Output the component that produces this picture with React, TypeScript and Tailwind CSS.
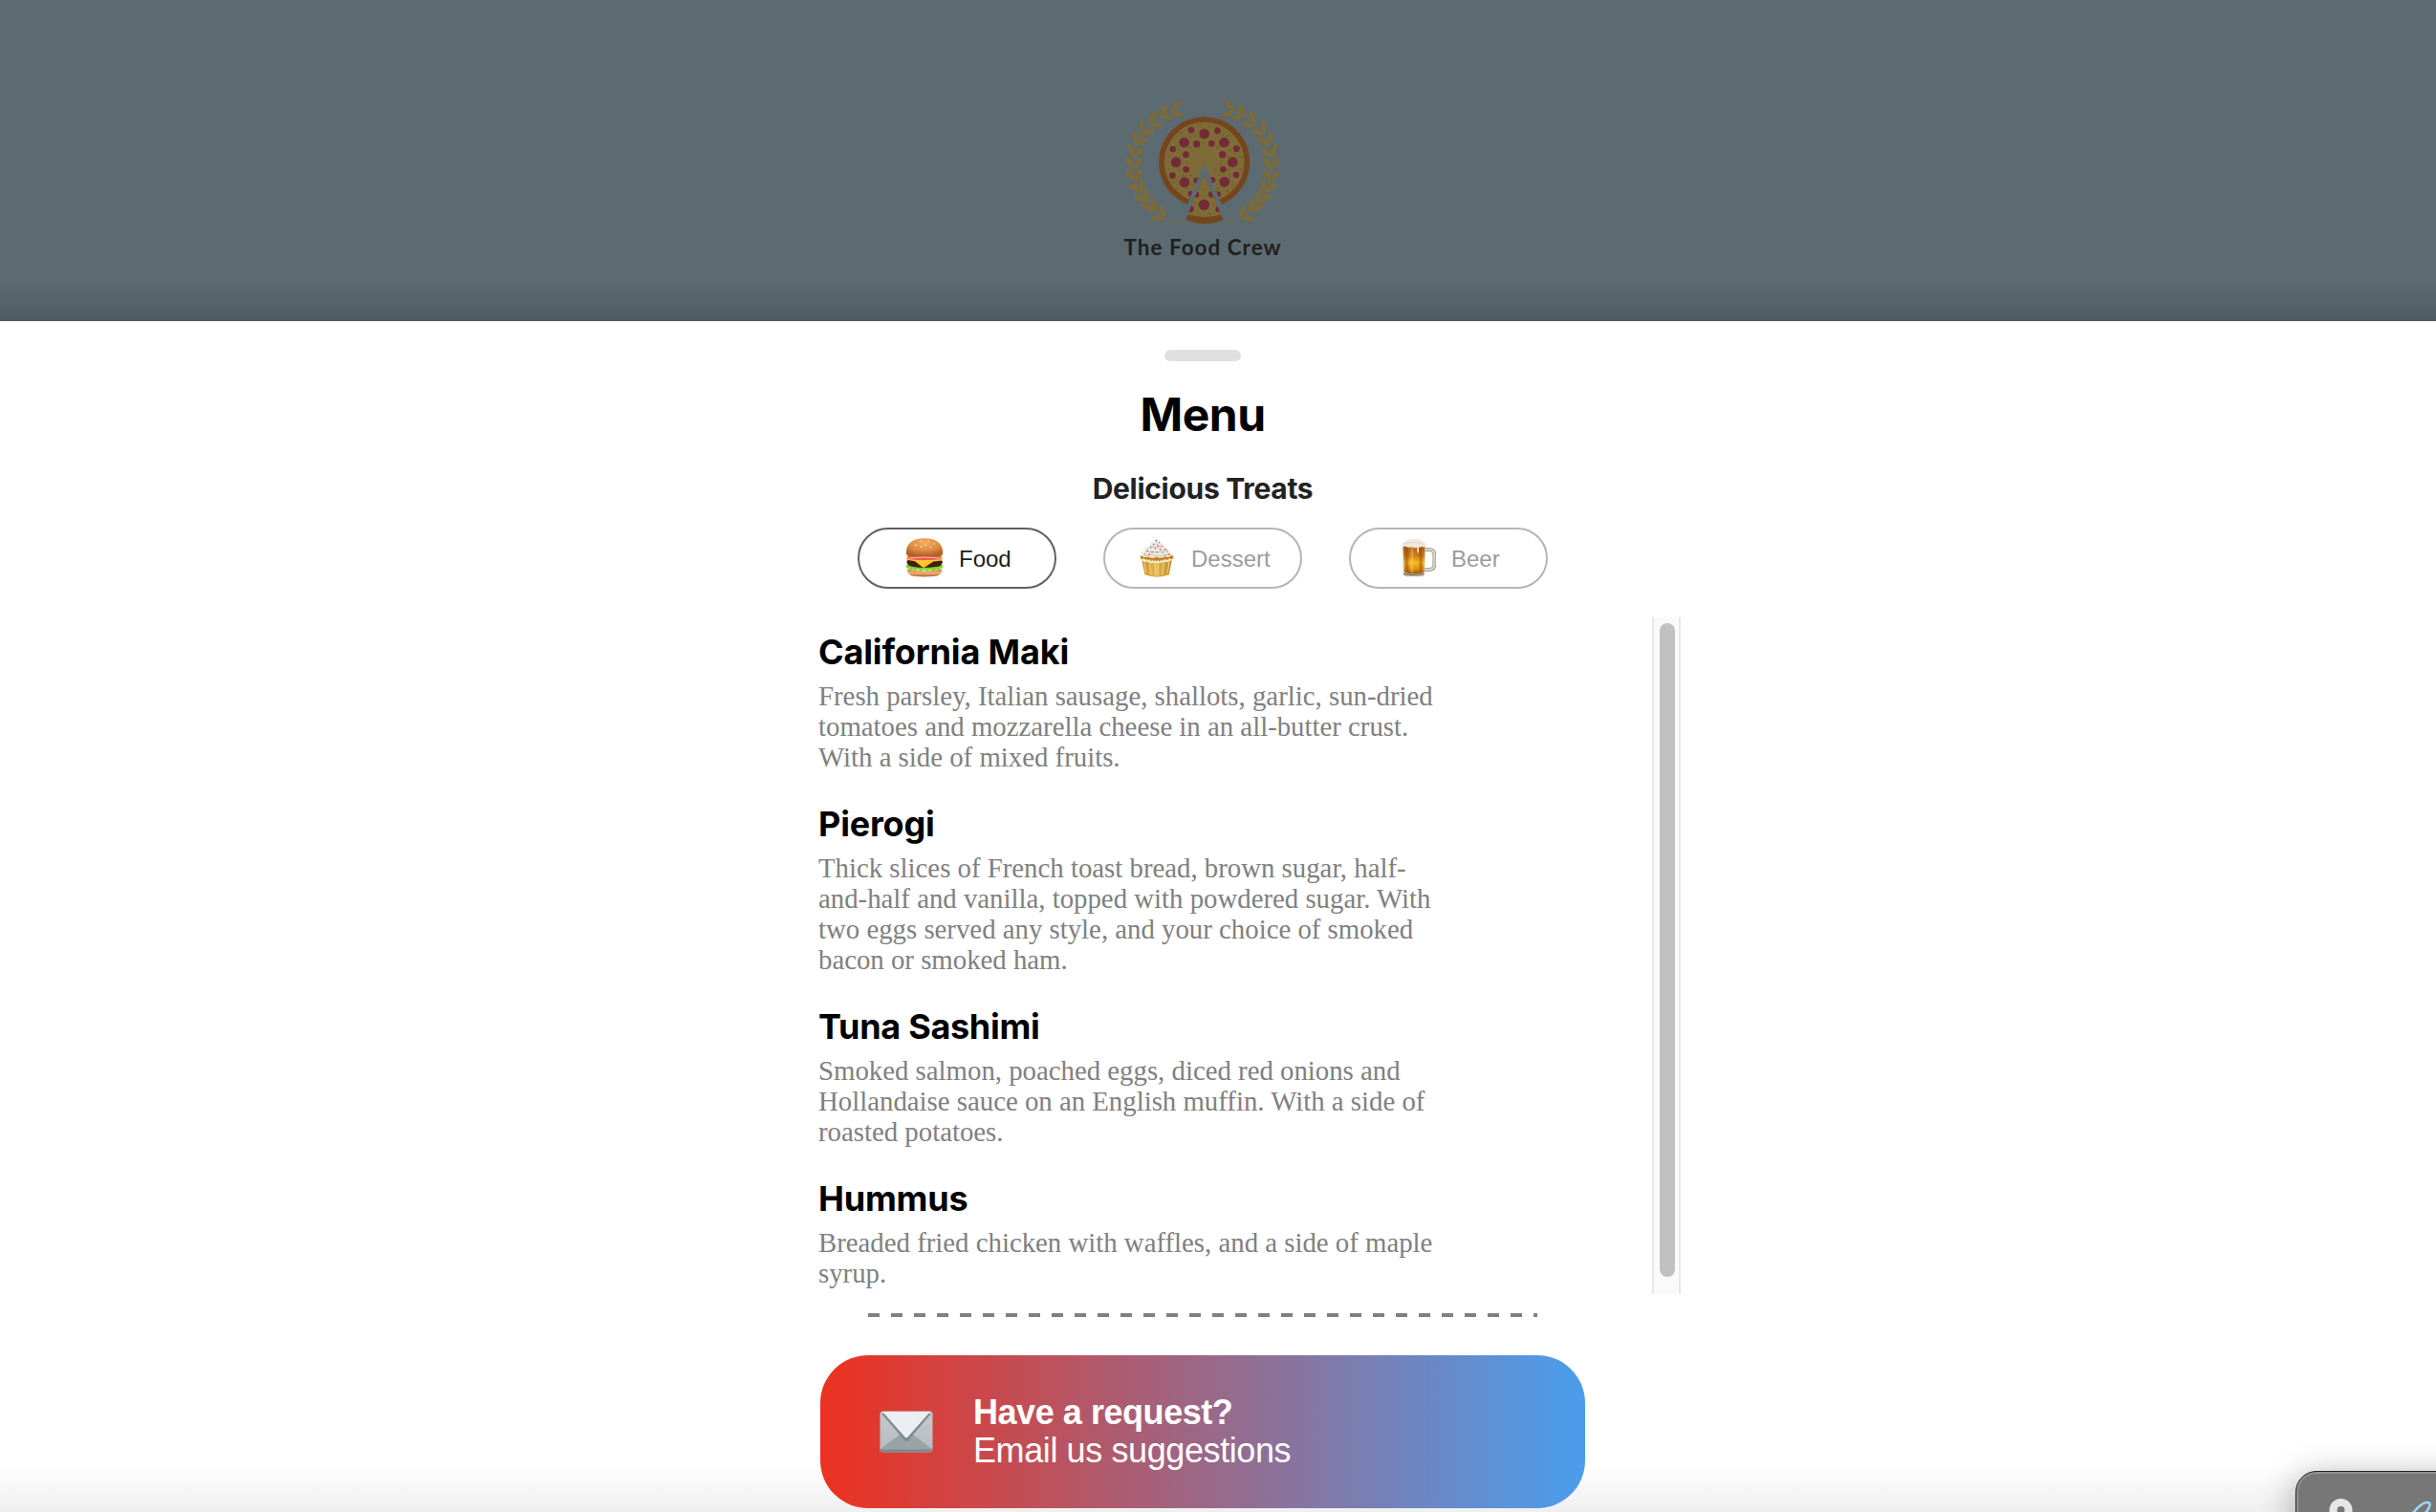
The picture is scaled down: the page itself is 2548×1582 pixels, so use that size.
import React from "react";

type Point = [number, number];

const LEAVES: [Point, Point][] = [
  [[207, 414], [160, 416]], [[206, 413], [191, 374]],
  [[179, 397], [129, 369]], [[178, 396], [164, 352]],
  [[154, 369], [107, 340]], [[153, 368], [142, 322]],
  [[134, 336], [90, 306]], [[133, 333], [133, 290]],
  [[114, 299], [82, 265]], [[114, 299], [129, 260]],
  [[107, 262], [84, 222]], [[108, 262], [132, 224]],
  [[107, 224], [93, 180]], [[108, 224], [140, 194]],
  [[115, 187], [110, 140]], [[115, 187], [155, 163]],
  [[131, 153], [135, 106]], [[131, 154], [174, 138]],
  [[156, 122], [174, 80]], [[157, 123], [201, 120]],
  [[157, 118], [176, 78]], [[189, 93], [213, 58]],
  [[190, 94], [232, 102]],
  [[223, 77], [256, 46]], [[223, 77], [263, 95]],
];

function leafPath([[x1, y1], [x2, y2]]: [Point, Point]) {
  const dx = x2 - x1;
  const dy = y2 - y1;
  const len = Math.hypot(dx, dy);
  const nx = -dy / len;
  const ny = dx / len;
  const ctrl = (t: number, w: number) => `${x1 + dx * t + nx * w} ${y1 + dy * t + ny * w}`;
  return `M${x1} ${y1}C${ctrl(0.3, 9)} ${ctrl(0.8, 12)} ${x2} ${y2}C${ctrl(0.8, -12)} ${ctrl(0.3, -9)} ${x1} ${y1}Z`;
}

function Laurel() {
  return (
    <g fill="#7d6b39">
      <path
        d="M256 432Q225 430 200 412Q130 365 113 299Q98 240 115 187Q135 125 190 93L223 77"
        fill="none"
        stroke="#7d6b39"
        strokeWidth="2.500"
      />
      {LEAVES.map((leaf, i) => (
        <path key={i} d={leafPath(leaf)} />
      ))}
    </g>
  );
}

const PEPPERONI = [
  [329, 150, 16], [266, 177, 16], [391, 177, 16], [240, 239, 16], [418, 239, 16],
  [267, 302, 16], [392, 301, 16], [288, 138, 10], [370, 140, 10], [305, 182, 11],
  [352, 181, 10], [230, 198, 10], [430, 197, 10], [271, 215, 10], [386, 215, 11],
  [272, 262, 10], [388, 262, 10], [229, 281, 10], [429, 279, 10], [304, 296, 9],
  [354, 295, 10], [287, 338, 9], [372, 340, 9],
];

const SPECKS = [
  [256, 147], [317, 124], [345, 127], [389, 152], [405, 156], [315, 160], [284, 160],
  [300, 156], [247, 198], [254, 223], [285, 194], [329, 180], [370, 193], [409, 202],
  [404, 222], [442, 221], [217, 222], [217, 262], [250, 263], [262, 281], [286, 280],
  [291, 310], [244, 322], [258, 334], [276, 322], [372, 322], [401, 332], [374, 279],
  [404, 264], [443, 262], [409, 284], [380, 245], [277, 240], [418, 310], [364, 262],
  [232, 300], [343, 158], [372, 160], [246, 157],
];

function Logo() {
  return (
    <svg viewBox="0 0 660 450" className="h-[150px] w-[220px]">
      <Laurel />
      <g transform="translate(648 0) scale(-1 1)">
        <Laurel />
      </g>
      <circle cx="329" cy="239" r="134" fill="#7f6b38" stroke="#75461d" strokeWidth="17" />
      {SPECKS.map(([x, y], i) => (
        <circle key={i} cx={x} cy={y} r="3.5" fill="#6c6132" />
      ))}
      {PEPPERONI.map(([x, y, r], i) => (
        <circle key={i} cx={x} cy={y} r={r} fill="#722b37" />
      ))}
      <path d="M329 241L275 374L260 440H400L384 372Z" fill="#5b6b71" />
      <path d="M329 279L271 420Q329 444 388 420Z" fill="#75461d" />
      <path d="M329 279L278 403Q329 419 381 403Z" fill="#7f6b38" />
      <clipPath id="slice">
        <path d="M329 279L276 406Q329 419 382 406Z" />
      </clipPath>
      <g clipPath="url(#slice)" fill="#722b37">
        <circle cx="328" cy="373" r="17" />
        <circle cx="304" cy="341" r="9" />
        <circle cx="352" cy="340" r="10" />
        <circle cx="286" cy="386" r="10" />
        <circle cx="373" cy="387" r="9" />
        <g fill="#6c6132">
          <circle cx="328" cy="325" r="3" />
          <circle cx="299" cy="372" r="3" />
          <circle cx="359" cy="373" r="3" />
          <circle cx="310" cy="398" r="3" />
          <circle cx="345" cy="401" r="3" />
        </g>
      </g>
    </svg>
  );
}

function Burger() {
  return (
    <svg viewBox="0 0 120 124" className="h-[41px] w-10">
      <defs>
        <radialGradient id="bun" cx="0.5" cy="0.25" r="0.7">
          <stop offset="0" stopColor="#f2ac62" />
          <stop offset="0.6" stopColor="#dd8b45" />
          <stop offset="1" stopColor="#b5602a" />
        </radialGradient>
        <linearGradient id="bunBase" x2="0" y2="1">
          <stop offset="0" stopColor="#c87b3e" />
          <stop offset="0.5" stopColor="#eeb273" />
          <stop offset="1" stopColor="#b5642f" />
        </linearGradient>
      </defs>
      <path d="M5 98Q60 110 115 98Q116 119 90 121Q60 124 30 121Q5 119 5 98Z" fill="url(#bunBase)" />
      <path d="M2 86Q7 80 20 84L100 84Q113 80 119 87Q120 95 110 96Q107 105 98 98Q88 108 78 99Q68 108 59 100Q48 108 40 99Q30 106 23 98Q12 105 10 96Q0 96 2 86Z" fill="#83d62c" />
      <path d="M4 76Q4 68 14 67L106 67Q117 68 117 76Q115 90 96 91Q60 97 24 91Q6 88 4 76Z" fill="#42200f" />
      <path d="M2 64Q60 54 118 64L116 71L88 74L61 92Q57 94 51 90L30 73L4 69Z" fill="#ffc52e" />
      <path d="M7 57Q60 50 113 57Q116 64 110 67Q60 72 10 67Q3 64 7 57Z" fill="#e8574b" />
      <path d="M9 62Q60 56 111 62L111 66Q60 60 9 66Z" fill="#f7b09b" />
      <path d="M2 48Q2 1 60 1Q118 1 118 48Q118 60 95 59Q60 56 25 59Q2 60 2 48Z" fill="url(#bun)" />
      <g fill="#fbe4b7">
        <ellipse cx="33" cy="22" rx="3" ry="2" />
        <ellipse cx="49" cy="9" rx="3" ry="2" />
        <ellipse cx="63" cy="21" rx="2" ry="3" />
        <ellipse cx="73" cy="10" rx="3" ry="2" />
        <ellipse cx="80" cy="29" rx="2" ry="3" />
        <ellipse cx="91" cy="18" rx="3" ry="2" />
        <ellipse cx="50" cy="27" rx="2" ry="3" />
      </g>
    </svg>
  );
}

const SPRINKLES: [number, number, string][] = [
  [52, 8, "#e0486a"], [62, 14, "#45b97c"], [44, 20, "#e0486a"], [57, 24, "#e0486a"],
  [70, 26, "#e07aa0"], [35, 30, "#45b97c"], [49, 33, "#4aa6d6"], [65, 36, "#e0486a"],
  [80, 36, "#e0486a"], [88, 43, "#45b97c"], [24, 40, "#e0486a"], [39, 44, "#e0486a"],
  [55, 45, "#45b97c"], [73, 46, "#45b97c"], [93, 52, "#e0486a"], [16, 50, "#45b97c"],
  [30, 52, "#e0486a"], [82, 54, "#e07aa0"],
];

function Cupcake() {
  return (
    <svg viewBox="0 0 108 124" className="h-[41px] w-9">
      <defs>
        <linearGradient id="wrapper" x2="1" y2="0">
          <stop offset="0" stopColor="#c98f22" />
          <stop offset="0.45" stopColor="#e6b548" />
          <stop offset="1" stopColor="#c18a26" />
        </linearGradient>
      </defs>
      <path d="M4 58H104L93 116Q54 130 16 116Z" fill="url(#wrapper)" />
      <path d="M1 64Q2 52 14 53Q54 44 94 53Q107 52 107 64Q54 82 1 64Z" fill="#c07f1a" />
      <path
        d="M13 70L20 110M31 73L36 116M49 76L50 118M58 76L58 118M76 73L72 116M94 70L88 110"
        fill="none"
        stroke="#f2dfab"
        strokeOpacity="0.7"
        strokeWidth="4"
      />
      <path d="M2 65Q8 74 13 67Q17 76 22 70Q27 79 31 71Q36 81 40 73Q45 81 49 73Q54 81 58 73Q63 81 67 73Q72 79 76 70Q81 78 84 70Q90 77 94 67Q101 73 106 65" fill="none" stroke="#f8edcf" strokeWidth="5" />
      <path d="M5 55Q4 43 15 40Q14 27 30 25Q33 12 45 12Q52 9 53 1Q60 9 62 15Q78 17 77 27Q90 29 90 39Q101 43 101 54Q94 64 80 58Q67 67 54 60Q38 67 28 59Q12 64 5 55Z" fill="#eee9df" />
      <path d="M20 42Q50 49 88 38M34 27Q55 34 75 25M13 56Q35 50 48 56Q70 59 95 51" fill="none" stroke="#c9c1b2" strokeWidth="3" />
      {SPRINKLES.map(([x, y, color], i) => (
        <circle key={i} cx={x} cy={y} r="2.5" fill={color} />
      ))}
    </svg>
  );
}

function BeerMug() {
  return (
    <svg viewBox="0 0 108 122" className="h-[41px] w-9">
      <defs>
        <linearGradient id="beer" x2="0" y2="1">
          <stop offset="0" stopColor="#b0611a" />
          <stop offset="0.35" stopColor="#cf7a16" />
          <stop offset="0.6" stopColor="#fbb91f" />
          <stop offset="0.85" stopColor="#d98a16" />
          <stop offset="1" stopColor="#8a4c10" />
        </linearGradient>
      </defs>
      <path d="M70 36H88Q103 37 103 52V82Q103 98 86 99H70" fill="none" stroke="#8f897d" strokeWidth="11" />
      <path d="M70 36H88Q103 37 103 52V82Q103 98 86 99H70" fill="none" stroke="#d9d5cc" strokeWidth="7" />
      <path d="M3 22H75L72 112Q72 120 60 120H15Q6 120 6 112Z" fill="#c9bda8" />
      <path d="M5 24H73L70 107Q38 116 9 107Z" fill="url(#beer)" />
      <path d="M10 26H22V106L11 102ZM55 26H65V104L56 106Z" fill="#8a4510" fillOpacity="0.45" />
      <path d="M29 30H37V108H29Z" fill="#ffe08a" fillOpacity="0.35" />
      <path d="M6 112Q38 119 70 112" fill="none" stroke="#6f5b3f" strokeWidth="3" />
      <path d="M2 25Q-1 13 10 11Q18 0 38 2Q58 0 66 11Q77 13 77 25Q70 31 64 26Q58 31 54 27V44Q51 48 49 43V29Q40 32 31 27Q18 32 14 25Q6 28 2 25Z" fill="#efe9e1" />
      <path d="M10 17Q38 8 70 19" fill="none" stroke="#d8cec3" strokeWidth="2" />
    </svg>
  );
}

function Envelope() {
  return (
    <svg viewBox="0 0 56 44" className="h-11 w-14">
      <defs>
        <linearGradient id="paper" x2="0" y2="1">
          <stop offset="0" stopColor="#c3c8cc" />
          <stop offset="1" stopColor="#b6bcc0" />
        </linearGradient>
      </defs>
      <rect x="0.5" y="0.5" width="55" height="43" rx="3.5" fill="url(#paper)" />
      <path d="M1 40L24 23H32L55 40Q55 43 52 43H4Q1 43 1 40Z" fill="#98a3a5" />
      <path d="M1 40.5H55Q55 43.5 52 43.5H4Q1 43.5 1 40.5Z" fill="#7d898c" />
      <path d="M2 3L26 31Q28 33.500 30 31L54 3Z" fill="#7f8b8e" />
      <path d="M3 1H53L29.500 27.500Q28 29 26.500 27.500Z" fill="#ebeff1" />
    </svg>
  );
}

type TabProps = { label: string; icon: React.ReactNode; active?: boolean; className: string };

function Tab({ label, icon, active, className }: TabProps) {
  return (
    <button
      className={`flex h-16 w-[208px] items-center rounded-full border-2 pb-0.5 text-[24px] leading-none ${
        active ? "border-[#606060] text-[#1c1c1c]" : "border-[#b5b5b5] text-[#9c9c9c]"
      } ${className}`}
    >
      {icon}
      <span className="pt-1">{label}</span>
    </button>
  );
}

const DISHES = [
  {
    name: "California Maki",
    spacing: "tracking-[-0.15px]",
    lines: [
      "Fresh parsley, Italian sausage, shallots, garlic, sun-dried",
      "tomatoes and mozzarella cheese in an all-butter crust.",
      "With a side of mixed fruits.",
    ],
  },
  {
    name: "Pierogi",
    spacing: "tracking-[-0.2px]",
    lines: [
      "Thick slices of French toast bread, brown sugar, half-",
      "and-half and vanilla, topped with powdered sugar. With",
      "two eggs served any style, and your choice of smoked",
      "bacon or smoked ham.",
    ],
  },
  {
    name: "Tuna Sashimi",
    spacing: "tracking-[-0.3px]",
    lines: [
      "Smoked salmon, poached eggs, diced red onions and",
      "Hollandaise sauce on an English muffin. With a side of",
      "roasted potatoes.",
    ],
  },
  {
    name: "Hummus",
    spacing: "tracking-[-0.2px]",
    lines: ["Breaded fried chicken with waffles, and a side of maple", "syrup."],
  },
];

function DishList() {
  return (
    <div className="ml-[856px] mt-[30px] flex h-[708px] w-[902px] overflow-hidden">
      <div className="flex flex-1 flex-col gap-8 pt-3.5">
        {DISHES.map((dish) => (
          <article key={dish.name}>
            <h3 className={`mb-2 font-[Inter,sans-serif] text-[36px] leading-[44px] font-bold text-black ${dish.spacing}`}>
              {dish.name}
            </h3>
            <p className="font-['Liberation_Serif',serif] text-[28.8px] leading-8 whitespace-nowrap text-[#808080]">
              {dish.lines.map((line) => (
                <span key={line} className="block">
                  {line}
                </span>
              ))}
            </p>
          </article>
        ))}
      </div>
      <div className="w-[30px] border-x-2 border-[#e8e8e8] bg-[#fafafa] pt-1.5 pr-1 pl-1.5">
        <div className="h-[684px] rounded-full bg-[#c1c1c1]" />
      </div>
    </div>
  );
}

export default function App() {
  return (
    <div className="relative flex h-[1582px] w-[2548px] flex-col overflow-hidden bg-white font-['Liberation_Sans',Arial,sans-serif]">
      <header className="flex h-[336px] shrink-0 flex-col items-center bg-[linear-gradient(to_bottom,#5b6b71_292px,#57666c_310px,#4e5a61_336px)] pt-[90px]">
        <div className="-ml-7">
          <Logo />
        </div>
        <p className="-ml-8 -mt-px font-[Lato,sans-serif] text-[22.5px] leading-10 font-bold tracking-[1px] text-[#231f20]">
          The Food Crew
        </p>
      </header>

      <main className="flex flex-1 flex-col bg-[linear-gradient(to_bottom,transparent_1196px,#efefef_1246px)]">
        <div className="ml-[1218px] mt-[30px] h-3 w-20 rounded-full bg-[#e0e0e0]" />
        <h1 className="mt-[26px] w-[2516px] text-center font-[Inter,sans-serif] text-[48px] leading-[60px] font-bold tracking-[-0.5px] text-black">
          Menu
        </h1>
        <h2 className="mt-[27px] w-[2516px] text-center font-[Inter,sans-serif] text-[30px] leading-10 font-bold tracking-[-0.3px] text-[#222]">
          Delicious Treats
        </h2>
        <nav className="ml-[897px] mt-[21px] flex gap-[49px]">
          <Tab label="Food" icon={<Burger />} active className="gap-4 pl-12" />
          <Tab label="Dessert" icon={<Cupcake />} className="gap-[18px] pl-9" />
          <Tab label="Beer" icon={<BeerMug />} className="gap-4 pl-[53px]" />
        </nav>

        <DishList />

        <div className="ml-[908px] mt-5 h-1 w-[700px] bg-[repeating-linear-gradient(to_right,#808080_0_12px,transparent_12px_24px)]" />

        <button className="ml-[858px] mt-10 flex h-40 w-[800px] items-center gap-[42px] rounded-[50px] bg-linear-[to_right,#ea3323_2%,#4d9cea_98%] pl-[62px] text-left text-[36px] leading-10 text-white">
          <Envelope />
          <span className="flex flex-col">
            <strong className="font-bold tracking-[-0.45px]">Have a request?</strong>
            <span className="tracking-[-0.4px]">Email us suggestions</span>
          </span>
        </button>
      </main>

      <aside className="absolute top-[1539px] left-[2401px] h-20 w-80 rounded-[22px] border border-[#222] bg-[#777] shadow-[0_6px_36px_rgba(0,0,0,0.32),inset_0_0_0_2px_#929292]">
        <svg viewBox="0 0 146 42" className="h-[42px] w-[146px]">
          <circle cx="46.500" cy="40" r="8" fill="none" stroke="#e6e6e6" strokeWidth="8" />
          <path
            d="M121 44Q130 33 136 32Q142 31 138 39L132 47"
            fill="none"
            stroke="#9bd8ff"
            strokeWidth="2.500"
          />
        </svg>
      </aside>
    </div>
  );
}
